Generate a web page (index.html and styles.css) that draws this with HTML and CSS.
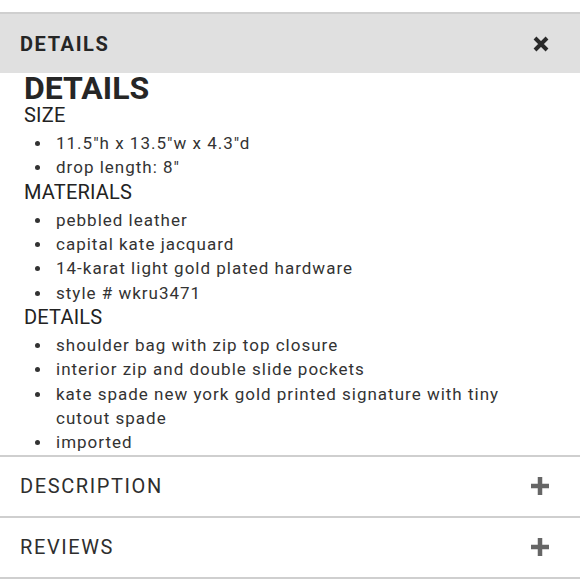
FILE: index.html
```html
<!DOCTYPE html>
<html>
<head>
<meta charset="utf-8">
<link rel="stylesheet" href="styles.css">
</head>
<body>
<div class="accordion">
  <section class="acc-item open">
    <div class="acc-head">
      <span class="acc-title bold">DETAILS</span>
      <svg class="icon" width="18" height="18" viewBox="0 0 18 18"><path d="M3 3 L15 15 M15 3 L3 15" stroke="#2a2a2a" stroke-width="4" stroke-linecap="butt"/></svg>
    </div>
    <div class="panel">
      <h2 class="big">DETAILS</h2>
      <h3 class="sub first">SIZE</h3>
      <ul class="list">
        <li>11.5"h x 13.5"w x 4.3"d</li>
        <li>drop length: 8"</li>
      </ul>
      <h3 class="sub">MATERIALS</h3>
      <ul class="list">
        <li>pebbled leather</li>
        <li>capital kate jacquard</li>
        <li>14-karat light gold plated hardware</li>
        <li>style # wkru3471</li>
      </ul>
      <h3 class="sub">DETAILS</h3>
      <ul class="list">
        <li>shoulder bag with zip top closure</li>
        <li>interior zip and double slide pockets</li>
        <li>kate spade new york gold printed signature with tiny cutout spade</li>
        <li>imported</li>
      </ul>
    </div>
  </section>
  <section class="acc-item">
    <div class="acc-head">
      <span class="acc-title">DESCRIPTION</span>
      <svg class="icon" width="20" height="20" viewBox="0 0 20 20"><path d="M10 1 V19 M1 10 H19" stroke="#666" stroke-width="4.5"/></svg>
    </div>
  </section>
  <section class="acc-item last">
    <div class="acc-head">
      <span class="acc-title">REVIEWS</span>
      <svg class="icon" width="20" height="20" viewBox="0 0 20 20"><path d="M10 1 V19 M1 10 H19" stroke="#666" stroke-width="4.5"/></svg>
    </div>
  </section>
</div>
</body>
</html>
```
FILE: styles.css
```css
html, body {
  margin: 0;
  padding: 0;
  background: #fff;
}
body {
  font-family: Roboto, "Liberation Sans", sans-serif;
  color: #333;
  padding-top: 12px;
}
.acc-item {
  border-top: 2px solid #cfcfcf;
}
.acc-item.last {
  border-bottom: 2px solid #cfcfcf;
}
.acc-head {
  height: 59px;
  padding: 0 30px 0 20px;
  display: flex;
  align-items: center;
  justify-content: space-between;
}
.acc-item.open .acc-head {
  background: #e0e0e0;
}
.acc-title {
  font-size: 20px;
  letter-spacing: 1.6px;
  color: #2e2e2e;
}
.acc-title.bold {
  font-weight: 700;
  letter-spacing: 1.6px;
  color: #262626;
}
.icon {
  display: block;
}
.panel {
  padding: 0 24px;
}
.big {
  margin: 0;
  font-size: 32px;
  line-height: 31px;
  font-weight: 700;
  color: #262626;
}
.sub {
  margin: 0;
  font-size: 20px;
  line-height: 24px;
  font-weight: 400;
  letter-spacing: 0.2px;
  color: #222;
}
.sub.first {
  line-height: 22px;
}
.list {
  margin: 4.2px 0 0;
  padding: 0;
  list-style: none;
  font-size: 17px;
  line-height: 24.3px;
  letter-spacing: 1px;
  color: #333;
}
.sub.first + .list {
  margin-top: 5px;
}
.list li {
  display: grid;
  grid-template-columns: 32px 1fr;
}
.list li::before {
  content: "";
  width: 5px;
  height: 5px;
  border-radius: 50%;
  background: #333;
  margin: 10px 0 0 11px;
}
```
